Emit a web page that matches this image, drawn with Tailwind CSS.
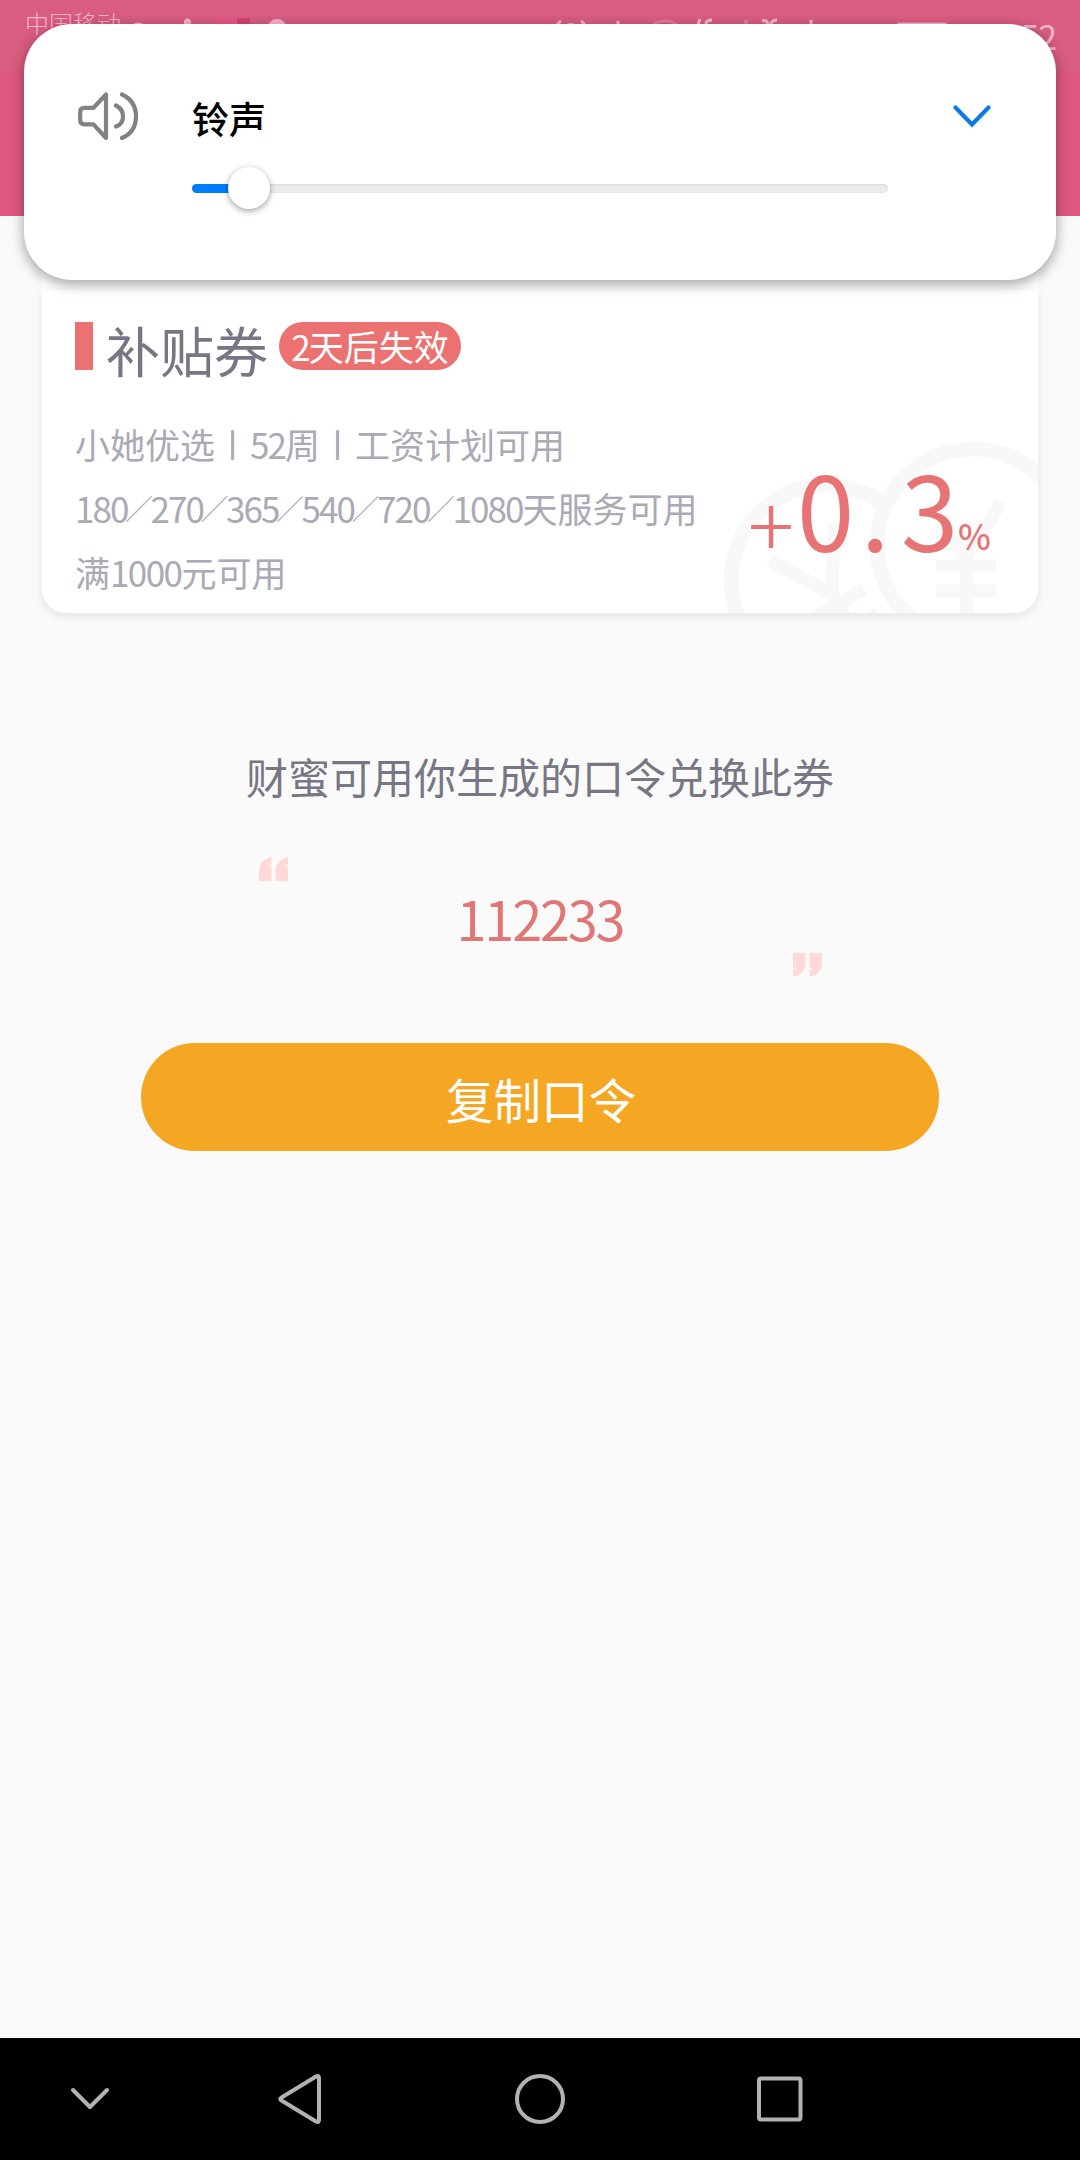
<!DOCTYPE html>
<html lang="zh-CN">
<head>
<meta charset="utf-8">
<title>补贴券</title>
<script src="https://cdn.jsdelivr.net/npm/@tailwindcss/browser@4"></script>
</head>
<body class="relative flex h-[2160px] w-[1080px] flex-col overflow-hidden bg-[#fafafa] font-['Noto_Sans_CJK_SC',sans-serif]">

<!-- status bar and app header -->
<header class="h-[216px] shrink-0 bg-[#e05880]">
  <div class="relative flex h-[72px] items-start overflow-hidden bg-[#d95c81] text-[#f6b4cb]">
    <div class="w-[120px] pt-[11px] pl-[25px] text-[24px] leading-[24px] font-light whitespace-nowrap">中国移动<br><span class="mt-[12px] block">中国移动</span></div>
    <svg class="absolute left-0 top-0" width="1080" height="60" viewBox="0 0 1080 60" fill="none" stroke="#f6b4cb" stroke-width="3">
      <circle cx="138" cy="31" r="7"/>
      <path d="M187.500 22V30" stroke-width="7" stroke-linecap="round"/>
      <path d="M214 18h22v12h-22z" fill="#e85585" stroke="none"/><path d="M237 18h13v12h-13z" fill="#d4436f" stroke="none"/>
      <circle cx="277" cy="29" r="10" fill="#f6b4cb" stroke="none"/>
      <path d="M561 21q-6 4-6 12M581 21q6 4 6 12M566 26q5-3 10 0M618 21v10"/>
      <circle cx="665" cy="41" r="20" stroke="#e27d9d"/>
      <path d="M700 19l-4 12M706 30v-6q0-4 6-4M762 21q6-2 6 5M770 28q0-8 7-8M811 20v12"/>
      <path d="M746 20v10" stroke="#e27d9d" stroke-width="4"/>
      <rect x="897" y="24" width="50" height="26" rx="3"/>
    </svg>
    <span class="ml-auto pt-[18px] pr-[24px] text-[34px] leading-[36px] tracking-[-1px]">8:52</span>
  </div>
</header>

<main class="flex grow flex-col items-center">
  <!-- coupon -->
  <section class="relative mt-[34px] h-[363.500px] w-[996px] shrink-0 overflow-hidden rounded-[24px] bg-white">
    <svg class="absolute left-0 top-0" width="996" height="363" viewBox="42 250 996 363" fill="none" stroke="#f8f8f8" stroke-width="15">
      <circle cx="827" cy="581" r="96"/>
      <g transform="rotate(-30 832 594)" stroke-width="13"><path d="M795 534l37 60 37-60M832 590v90M802 606h60M802 634h60"/></g>
      <circle cx="973" cy="545" r="96" fill="#fff"/>
      <path stroke-width="13" d="M929 502l37 56 35-56M966.500 550v90M936 566h60M936 591h60"/>
    </svg>
    <div class="relative flex h-full items-start justify-between pl-[33px]">
      <div class="flex flex-col pt-[72px]">
        <div class="flex h-[48px] items-start">
          <i class="h-[48px] w-[18px] bg-[#eb7271]"></i>
          <h1 class="ml-[13px] text-[54px] leading-[56px] text-[#777684]">补贴券</h1>
          <span class="ml-[11px] flex h-[48px] w-[182px] justify-center rounded-full bg-[#eb7271] text-[35px] leading-[48px] whitespace-nowrap text-white"><span class="tracking-[-0.055em]">2</span>天后失效</span>
        </div>
        <div class="mt-[42px] text-[35px] leading-[64px] whitespace-nowrap text-[#aaa9b5]">
          <p class="flex">小她优选<span class="flex w-[35px] justify-center text-[28px] font-black [-webkit-text-stroke:1.5px_#aaa9b5]">｜</span><span class="tracking-[-0.055em]">52</span>周<span class="flex w-[35px] justify-center text-[28px] font-black [-webkit-text-stroke:1.5px_#aaa9b5]">｜</span>工资计划可用</p>
          <p class="flex"><span class="tracking-[-0.055em]">180</span><span class="flex w-[23px] justify-center text-[28px] font-light">／</span><span class="tracking-[-0.055em]">270</span><span class="flex w-[23px] justify-center text-[28px] font-light">／</span><span class="tracking-[-0.055em]">365</span><span class="flex w-[23px] justify-center text-[28px] font-light">／</span><span class="tracking-[-0.055em]">540</span><span class="flex w-[23px] justify-center text-[28px] font-light">／</span><span class="tracking-[-0.055em]">720</span><span class="flex w-[23px] justify-center text-[28px] font-light">／</span><span class="tracking-[-0.055em]">1080</span>天服务可用</p>
          <p>满<span class="tracking-[-0.045em]">1000</span>元可用</p>
        </div>
      </div>
      <div class="flex items-start pt-[205px] pr-[47px] leading-[105px] text-[#e87374]">
        <span class="mr-[-2px] w-[56px] pt-[13px] text-center text-[86px] font-light">+</span>
        <span class="w-[52px] text-center text-[103px]">0</span>
        <span class="w-[52px] text-center text-[103px]">.</span>
        <span class="w-[52px] text-center text-[103px]">3</span>
        <span class="ml-[5px] w-[33px] pt-[27px] text-center text-[35px] font-medium">%</span>
      </div>
    </div>
  </section>

  <p class="mt-[132px] text-[42px] leading-[60px] text-[#777684]">财蜜可用你生成的口令兑换此券</p>

  <!-- password -->
  <div class="mt-[51px] flex h-[120px] w-[563px] justify-between">
    <svg width="29" height="24" viewBox="0 0 29 24" fill="#ffd8d7"><path d="M0 24V15Q0 3 12.500 0V7Q9 8 9.500 9.500L12.500 9V24z"/><path d="M16.500 24V15Q16.500 3 29 0V7Q25.500 8 26 9.500L29 9V24z"/></svg>
    <p class="pt-[24px] text-[54px] leading-[74px] tracking-[-0.04em] text-[#e07777]">112233</p>
    <svg class="self-end" width="29" height="24" viewBox="0 0 29 24" fill="#ffd8d7"><g transform="rotate(180 14.500 12)"><path d="M0 24V15Q0 3 12.500 0V7Q9 8 9.500 9.500L12.500 9V24z"/><path d="M16.500 24V15Q16.500 3 29 0V7Q25.500 8 26 9.500L29 9V24z"/></g></svg>
  </div>

  <button class="mt-[66px] flex h-[108px] w-[798px] justify-center rounded-full bg-[#f5a623] pl-[2px] text-[47.500px] leading-[112px] text-white">复制口令</button>
</main>

<!-- navigation bar -->
<nav class="flex h-[122px] shrink-0 bg-black">
  <svg width="1080" height="122" viewBox="0 2038 1080 122" fill="none" stroke="#b2b2b2" stroke-width="4" stroke-linecap="round" stroke-linejoin="round">
    <path d="M73 2090l17 17 17-17"/>
    <path d="M319 2078v42q0 3-3 1.500L281.500 2100.500q-2.500-1.500 0-3L316 2076.500q3-1.500 3 1.500z"/>
    <circle cx="540" cy="2099" r="23"/>
    <rect x="759" y="2078.500" width="41.500" height="41" rx="2"/>
  </svg>
</nav>

<!-- volume panel -->
<aside class="absolute left-[24px] top-[24px] flex h-[256px] w-[1032px] rounded-[48px] bg-white shadow-[0_4px_14px_rgba(0,0,0,0.38)]">
  <svg class="mt-[68px] ml-[54px] shrink-0" width="61" height="49" viewBox="0 0 61 49" fill="none" stroke="#828282" stroke-width="4.200" stroke-linecap="round" stroke-linejoin="round">
    <path d="M28 2.500V46L15.500 32.300H6.500Q2.200 32.300 2.200 28V20Q2.200 15.800 6.500 15.800H15.500z"/>
    <path d="M38 13.500Q45 17 45 24.500T38 34.500M44 2.500Q58 9 58 24.500T44 46"/>
  </svg>
  <div class="ml-[53px] w-[696px] pt-[68px]">
    <div class="text-[37px] leading-[52px] font-medium text-black">铃声</div>
    <div class="relative mt-[40px] h-[9px] rounded-full bg-[#ebebeb] shadow-[inset_0_1px_2px_rgba(0,0,0,0.08)]">
      <div class="h-full w-[50px] rounded-full bg-[#007dfa]"></div>
      <i class="absolute -top-[17px] left-[36px] size-[42px] rounded-full bg-white shadow-[0_2px_6px_rgba(0,0,0,0.38)]"></i>
    </div>
  </div>
  <svg class="mt-[80px] ml-[65px] shrink-0" width="38" height="24" viewBox="0 0 38 24" fill="none" stroke="#0d79e6" stroke-width="4.200" stroke-linecap="round"><path d="M2.500 3.500L19 20.500 35.500 3.500"/></svg>
</aside>
<div class="pointer-events-none absolute left-[42px] top-[290px] h-[323px] w-[996px] rounded-b-[24px] shadow-[0_3px_8px_rgba(0,0,0,0.1)]"></div>
</body>
</html>
